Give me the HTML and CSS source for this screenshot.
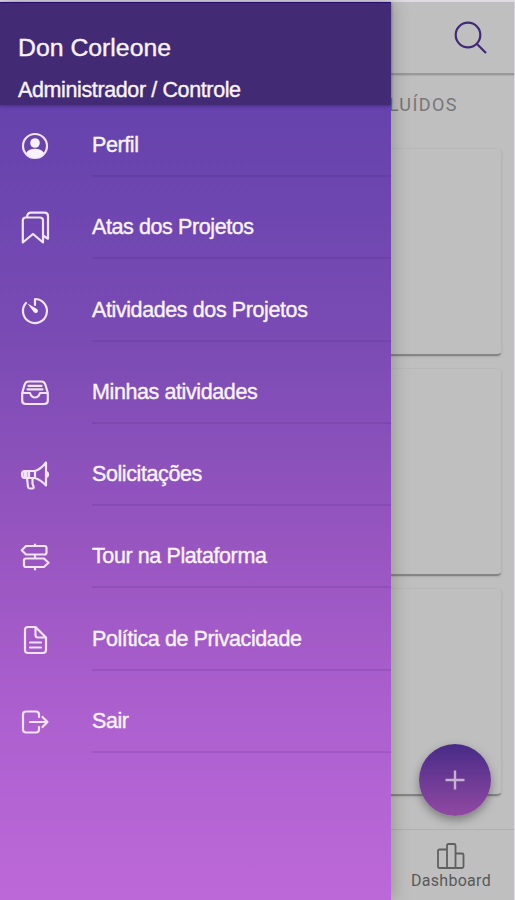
FILE: index.html
```html
<!DOCTYPE html>
<html lang="pt-BR">
<head>
<meta charset="utf-8">
<title>Menu</title>
<link rel="stylesheet" href="styles.css">
</head>
<body>
<div class="app">
  <main class="page">
    <header class="toolbar">
      <svg class="search" viewBox="0 0 34 34"><circle cx="14" cy="14" r="12.3"/><path d="M23 23l9 9"/></svg>
    </header>
    <div class="tab">CONCLUÍDOS</div>
    <section class="cards">
      <div class="card"></div>
      <div class="card"></div>
      <div class="card"></div>
    </section>
    <footer class="tabbar">
      <div class="dash">
        <svg viewBox="0 0 28 26"><path d="M1 8q0-1.500 1.500-1.500H10V25H2.500Q1 25 1 23.500zM10 25V2.500Q10 1 11.500 1H17q1.500 0 1.500 1.500V25zM18.500 10.500H25q1.500 0 1.500 1.500v11.500q0 1.500-1.500 1.500h-6.500z"/></svg>
        <span>Dashboard</span>
      </div>
    </footer>
  </main>
  <button class="fab" aria-label="+"><svg viewBox="0 0 20 20"><path d="M10 .5v19M.5 10h19"/></svg></button>
  <aside class="drawer">
    <header class="profile">
      <h1>Don Corleone</h1>
      <p>Administrador / Controle</p>
    </header>
    <nav class="menu">
      <a class="item"><svg viewBox="0 0 30 34"><circle cx="15" cy="17" r="12"/><circle class="solid" cx="15" cy="14" r="4.800"/><path class="solid" d="M6 24q3-4.200 9-4.200t9 4.200q-3.500 5-9 5t-9-5z"/></svg><span>Perfil</span></a>
      <a class="item"><svg viewBox="0 0 30 34"><path d="M2.800 31.500V9.500q0-3 3-3H20q3 0 3 3v22L13 23zM7 6q.5-4.300 4-4.300h13.500q3.500 0 3.500 3.500v22.500L23 24.500"/></svg><span>Atas dos Projetos</span></a>
      <a class="item"><svg viewBox="0 0 30 34"><path d="M15 11V5a12 12 0 1 1-9 4"/><path class="solid" d="M7.500 9.500l9 5.300q2.300 1.500 1 3.500-1.800 1.800-3.700-.3z"/></svg><span>Atividades dos Projetos</span></a>
      <a class="item"><svg viewBox="0 0 30 34"><path d="M2.200 17l2.300-8q1-3.500 4-3.500h13q3 0 4 3.500l2.300 8v7.500q0 3.500-3.500 3.500H5.700q-3.500 0-3.500-3.500zM2.200 17H10q1.500 4.500 5 4.500t5-4.500h7.800M8.500 9.800h13M7.500 13.300h15"/></svg><span>Minhas atividades</span></a>
      <a class="item"><svg viewBox="0 0 30 34"><path d="M4.500 13H15q6-2 11-8.500v23Q21 22 15 20H4.500Q2 20 2 16.500T4.500 13zM15 13v7M9 13v7M26 14q2 0 2 2.500T26 19M7 20l1 9q.2 1.500 2 1.500h2.500q1.500 0 1-2l-1-3V20"/><path d="M4.500 14.500v4M6.500 14v5"/></svg><span>Solicitações</span></a>
      <a class="item"><svg viewBox="0 0 30 34"><path d="M15 4.500V6M15 14.500v4M15 27v2.500M6 6h18.500q2 0 2 2v4.500q0 2-2 2H6l-4.200-4.200zM24 18.500H6q-2 0-2 2V25q0 2 2 2h18l4.500-4.200z"/></svg><span>Tour na Plataforma</span></a>
      <a class="item"><svg viewBox="0 0 30 34"><path d="M8 4h7.500L26 14.500V27q0 3-3 3H8q-3 0-3-3V7q0-3 3-3zM15.500 4v8q0 2.500 2.500 2.500h8M10 19.500h11M10 24.500h11"/></svg><span>Política de Privacidade</span></a>
      <a class="item"><svg viewBox="0 0 30 34"><path d="M19 12V9.500q0-3-3-3H6q-3 0-3 3v15q0 3 3 3h10q3 0 3-3V22M10 17h17.500M22.500 12l5 5-5 5"/></svg><span>Sair</span></a>
    </nav>
  </aside>
</div>
</body>
</html>
```
FILE: styles.css
```css
* { box-sizing: border-box; }
body { margin: 0; background: #dedbe2; }
.app {
  position: relative;
  width: 515px;
  height: 900px;
  overflow: hidden;
  padding: 2px 1px 0 0;
}
.page {
  height: 898px;
  background: #bfbfbf;
  display: flex;
  flex-direction: column;
}
.toolbar {
  height: 73px;
  flex: none;
  display: flex;
  justify-content: flex-end;
  align-items: center;
  padding: 1px 26px 0 0;
  border-bottom: 2px solid #999;
  box-shadow: 0 1px 1px #b0b0b0;
}
.search {
  width: 34px;
  height: 34px;
  fill: none;
  stroke: #422878;
  stroke-width: 2.2;
}
.tab {
  height: 72px;
  padding: 19px 56px 0 0;
  text-align: right;
  font: 18px/22px Roboto, sans-serif;
  letter-spacing: 1.45px;
  color: #777;
}
.cards {
  flex: 1;
  display: flex;
  flex-direction: column;
  gap: 12px;
  padding: 1px 12px 0;
}
.card {
  height: 208px;
  border-radius: 5px;
  border-right: 1px solid #b5b5b5;
  border-top: 1px solid #b9b9b9;
  border-bottom: 2px solid #858585;
  box-shadow: 0 1px 2px #aaa;
}
.tabbar {
  height: 71px;
  border-top: 1px solid #b0b0b0;
  display: flex;
  justify-content: flex-end;
  padding: 13px 23px 0 0;
}
.dash {
  display: flex;
  flex-direction: column;
  align-items: center;
  font: 16px/20px Roboto, sans-serif;
  letter-spacing: .3px;
  color: #595959;
}
.dash svg {
  width: 28px;
  height: 26px;
  margin-bottom: 2px;
  fill: none;
  stroke: #606060;
  stroke-width: 1.8;
}
.fab {
  position: absolute;
  left: 419px;
  top: 744px;
  width: 72px;
  height: 72px;
  border: 0;
  border-radius: 50%;
  display: grid;
  place-items: center;
  background: linear-gradient(#472b86, #9149a3);
  box-shadow: 0 4px 10px rgba(0, 0, 0, .35);
}
.fab svg {
  width: 20px;
  height: 20px;
  stroke: #c5b2d2;
  stroke-width: 2.4;
}
.drawer {
  position: absolute;
  left: 0;
  top: 2px;
  width: 391px;
  height: 898px;
  background: linear-gradient(#603fac 0%, #6643ad 13%, #7b4bb4 38%, #9755c0 60%, #ad60cf 80%, #bd68d9 100%);
  box-shadow: 2px 0 16px rgba(40, 45, 30, .28);
  font-family: "Liberation Sans", Arial, sans-serif;
  color: #f7f2fc;
  -webkit-text-stroke: .4px #f7f2fc;
}
.profile {
  height: 103px;
  padding: 30px 18px 0;
  background: #432a75;
  border-top: 1px solid #270b6d;
  box-shadow: 0 1px 3px rgba(50, 25, 110, .6);
}
.profile h1 {
  margin: 0;
  font-weight: 400;
  font-size: 24.8px;
  line-height: 30px;
}
.profile p {
  margin: 15px 0 0;
  font-size: 21.500px;
  line-height: 24px;
  letter-spacing: -.38px;
}
.menu {
  padding-top: 10px;
  display: flex;
  flex-direction: column;
  gap: 20.3px;
}
.item {
  height: 62px;
  display: flex;
  align-items: center;
  padding-left: 20px;
}
.item svg {
  width: 30px;
  height: 34px;
  margin-right: 42px;
  flex: none;
  fill: none;
  stroke: #f0e3fa;
  stroke-width: 2.2;
  stroke-linejoin: round;
  stroke-linecap: round;
}
.item .solid { fill: #f8f2fd; stroke: none; }
.item span {
  flex: 1;
  height: 62px;
  border-bottom: 2px solid rgba(70, 25, 130, .14);
  font-size: 21.500px;
  line-height: 61px;
  letter-spacing: -.4px;
}
```
